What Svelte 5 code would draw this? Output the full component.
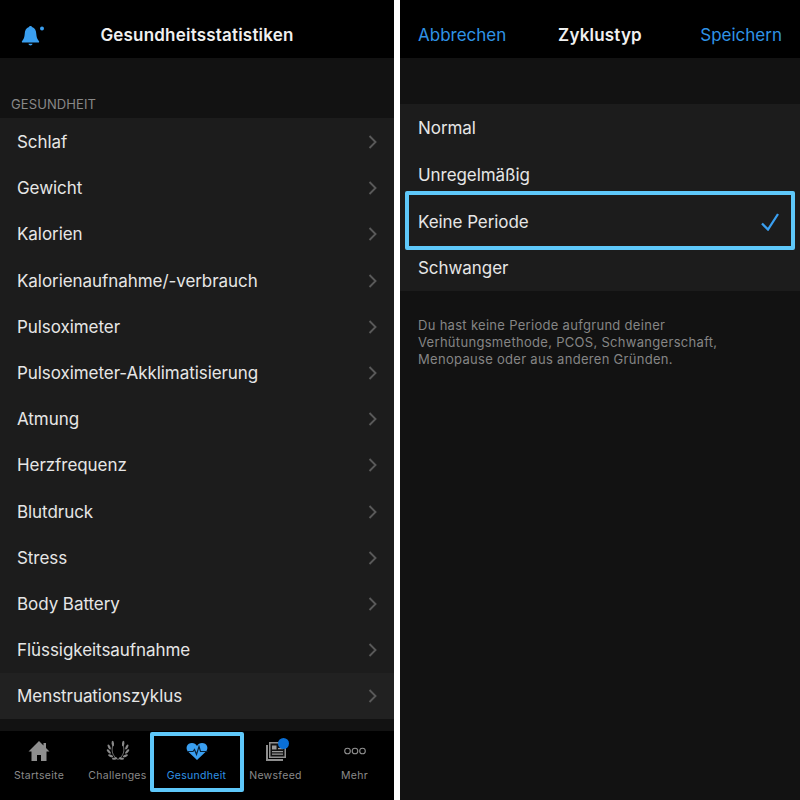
<script>
    const healthItems = [
        'Schlaf', 'Gewicht', 'Kalorien', 'Kalorienaufnahme/-verbrauch', 'Pulsoximeter',
        'Pulsoximeter-Akklimatisierung', 'Atmung', 'Herzfrequenz', 'Blutdruck', 'Stress',
        'Body Battery', 'Flüssigkeitsaufnahme', 'Menstruationszyklus'
    ]
    const cycleTypes = ['Normal', 'Unregelmäßig', 'Keine Periode', 'Schwanger']

    // leaves of one laurel branch: x, y, rotation
    const leaves = [
        [6.8, 3.5, -5], [3.2, 7, -28], [2.8, 11.5, -45], [4.6, 15.8, -68], [8.6, 18.6, -95]
    ]
</script>

<div class="page">
    <section class="phone left">
        <header class="topbar">
            <span class="bell">
                <svg width="26" height="24" viewBox="0 0 26 24">
                    <path d="M10 3c.3-1.200 2.700-1.200 3 0 3 1 4.100 3.600 4.300 7 .2 3 .8 5 2.700 7.200.4.500.2 1.300-.6 1.300H3.600c-.8 0-1-.8-.6-1.300C4.900 15 5.500 13 5.700 10c.2-3.400 1.300-6 4.300-7z" fill="#3a9ff0"/>
                    <path d="M9.500 19.800h4c-.2 2.200-3.800 2.200-4 0z" fill="#3a9ff0"/>
                    <circle cx="23" cy="4.500" r="2" fill="#3a9ff0"/>
                </svg>
            </span>
            <h1 class="wide">Gesundheitsstatistiken</h1>
        </header>

        <div class="content">
            <div class="section-label">GESUNDHEIT</div>
            <ul class="list">
                {#each healthItems as item}
                    <li class="row" class:current={item === 'Menstruationszyklus'}>
                        <span>{item}</span>
                        <svg class="chevron" width="10" height="16" viewBox="0 0 10 16">
                            <path d="M1.500 2 7.500 8l-6 6" fill="none" stroke="#595959" stroke-width="1.900"/>
                        </svg>
                    </li>
                {/each}
            </ul>
        </div>

        <nav class="tabbar">
            <div class="tab">
                <svg width="24" height="22" viewBox="0 0 24 22">
                    <path d="M12 1 1.500 11.500h3V21H10v-6h4v6h5.500v-9.500h3L19 8V3h-2.500v2.500z" fill="#8f8f8f"/>
                </svg>
                <span>Startseite</span>
            </div>
            <div class="tab">
                <svg width="24" height="22" viewBox="0 0 24 22" fill="#8a8a8a">
                    <path d="M7.500 4C5 9 5.500 15.500 12 19.500 18.500 15.500 19 9 16.500 4" fill="none" stroke="#8a8a8a" stroke-width=".8"/>
                    {#each leaves as [x, y, r]}
                        <ellipse cx={x} cy={y} rx="1.200" ry="2.700" transform="rotate({r} {x} {y})"/>
                        <ellipse cx={24 - x} cy={y} rx="1.200" ry="2.700" transform="rotate({-r} {24 - x} {y})"/>
                    {/each}
                </svg>
                <span>Challenges</span>
            </div>
            <div class="tab active">
                <svg width="24" height="22" viewBox="0 0 24 22">
                    <path d="M12 20 3 11.500C0 8 2 3 7 3c2.200 0 4 1 5 3 1-2 2.800-3 5-3 5 0 7 5 4 8.500z" fill="#3a9ff0"/>
                    <path d="M2 11.500h6l1.500-2 2 5 2.500-8 1.500 5h7" fill="none" stroke="#0a2238" stroke-width="1.200"/>
                </svg>
                <span>Gesundheit</span>
            </div>
            <div class="tab">
                <span class="news">
                    <svg width="24" height="22" viewBox="0 0 24 22">
                        <path d="M2 5h2v14h15v2H2z" fill="#8f8f8f"/>
                        <path d="M5 2h17v16H5z" fill="#8f8f8f"/>
                        <path d="M6.500 3.500h14v13h-14z" fill="#111"/>
                        <path d="M8 5.500h4.500v4H8zM14 8h5v1.300h-5zM8 11h11v1.300H8zM8 13.500h11v1.300H8z" fill="#9a9a9a"/>
                    </svg>
                    <i class="dot"></i>
                </span>
                <span>Newsfeed</span>
            </div>
            <div class="tab">
                <svg width="24" height="22" viewBox="0 0 24 22" fill="none" stroke="#8f8f8f" stroke-width="1.100">
                    <circle cx="4.500" cy="11" r="2.800"/>
                    <circle cx="12" cy="11" r="2.800"/>
                    <circle cx="19.500" cy="11" r="2.800"/>
                </svg>
                <span>Mehr</span>
            </div>
        </nav>
    </section>

    <section class="phone right">
        <header class="topbar split">
            <span class="action">Abbrechen</span>
            <h1 class="wide">Zyklustyp</h1>
            <span class="action end">Speichern</span>
        </header>

        <div class="content">
            <ul class="list cycle">
                {#each cycleTypes as type}
                    <li class="row" class:selected={type === 'Keine Periode'}>
                        <span>{type}</span>
                        {#if type === 'Keine Periode'}
                            <svg width="20" height="18" viewBox="0 0 20 18">
                                <path d="M2 10.500 8 16.500 18 1" fill="none" stroke="#3a9ff0" stroke-width="2.300"/>
                            </svg>
                        {/if}
                    </li>
                {/each}
            </ul>
            <p class="hint">Du hast keine Periode aufgrund deiner<br>Verhütungsmethode, PCOS, Schwangerschaft,<br>Menopause oder aus anderen Gründen.</p>
        </div>
    </section>
</div>

<style>
    :global(body) {
        margin: 0;
        background: #fff;
    }

    .page {
        display: flex;
        justify-content: space-between;
        width: 800px;
        height: 800px;
        font-family: Inter, "Liberation Sans", sans-serif;
        color: #e8e8e8;
    }

    .phone {
        display: flex;
        flex-direction: column;
        height: 800px;
        background: #121212;
    }

    .left {
        width: 394px;
    }

    .right {
        width: 400px;
    }

    .topbar {
        position: relative;
        display: flex;
        align-items: center;
        justify-content: center;
        flex: none;
        height: 58px;
        padding-top: 11px;
        box-sizing: border-box;
        background: #000;
    }

    .topbar.split {
        display: grid;
        grid-template-columns: 1fr auto 1fr;
        padding-left: 18px;
        padding-right: 18px;
    }

    h1 {
        margin: 0;
        font-size: 17px;
        font-weight: 600;
        color: #f0f0f0;
    }

    h1.wide {
        letter-spacing: 0.2px;
    }

    .bell {
        position: absolute;
        left: 19px;
        top: 24px;
        line-height: 0;
    }

    .action {
        font-size: 17px;
        color: #2f93e6;
    }

    .action.end {
        justify-self: end;
    }

    .content {
        flex: 1;
    }

    .section-label {
        padding: 38px 0 0 11px;
        height: 22px;
        font-size: 13px;
        letter-spacing: 0.1px;
        line-height: 16px;
        color: #888;
    }

    .list {
        margin: 0;
        padding: 0;
        list-style: none;
        background: #1c1c1c;
    }

    .row {
        position: relative;
        display: flex;
        align-items: center;
        justify-content: space-between;
        box-sizing: border-box;
        height: 46.230px;
        padding: 1.500px 17px 0;
        font-size: 17px;
        letter-spacing: -0.06px;
        color: #e6e6e6;
    }

    .row.current {
        background: #212121;
    }

    .cycle {
        margin-top: 46px;
    }

    .cycle .row {
        height: 46.750px;
        padding-left: 18px;
        padding-right: 20px;
    }

    /* annotation frame on top of the row */
    .row.selected::after {
        content: '';
        position: absolute;
        inset: -7px 5px -6px 5px;
        border: 4px solid #5ec8fa;
        border-radius: 2px;
    }

    .chevron {
        margin-right: -1px;
    }

    .hint {
        margin: 26px 18px 0;
        font-size: 13px;
        letter-spacing: 0.3px;
        line-height: 17px;
        color: #858585;
    }

    .tabbar {
        display: grid;
        grid-template-columns: 78px 79px 79px 79px 79px;
        flex: none;
        height: 69px;
        background: #000;
    }

    .tab {
        position: relative;
        display: flex;
        flex-direction: column;
        align-items: center;
        padding-top: 9px;
        box-sizing: border-box;
        font-size: 10.500px;
        letter-spacing: 0.3px;
        color: #8a8a8a;
    }

    .tab span:last-child {
        margin-top: 7px;
        white-space: nowrap;
    }

    .tab.active {
        color: #2f93e6;
    }

    .tab.active::after {
        content: '';
        position: absolute;
        inset: 1px -8px 8px -7px;
        border: 4px solid #5ec8fa;
        border-radius: 2px;
    }

    .news {
        position: relative;
        line-height: 0;
        margin: 0 !important;
    }

    .dot {
        position: absolute;
        top: -2px;
        right: -1.500px;
        width: 11px;
        height: 11px;
        border-radius: 50%;
        background: #0a6fd6;
    }
</style>
